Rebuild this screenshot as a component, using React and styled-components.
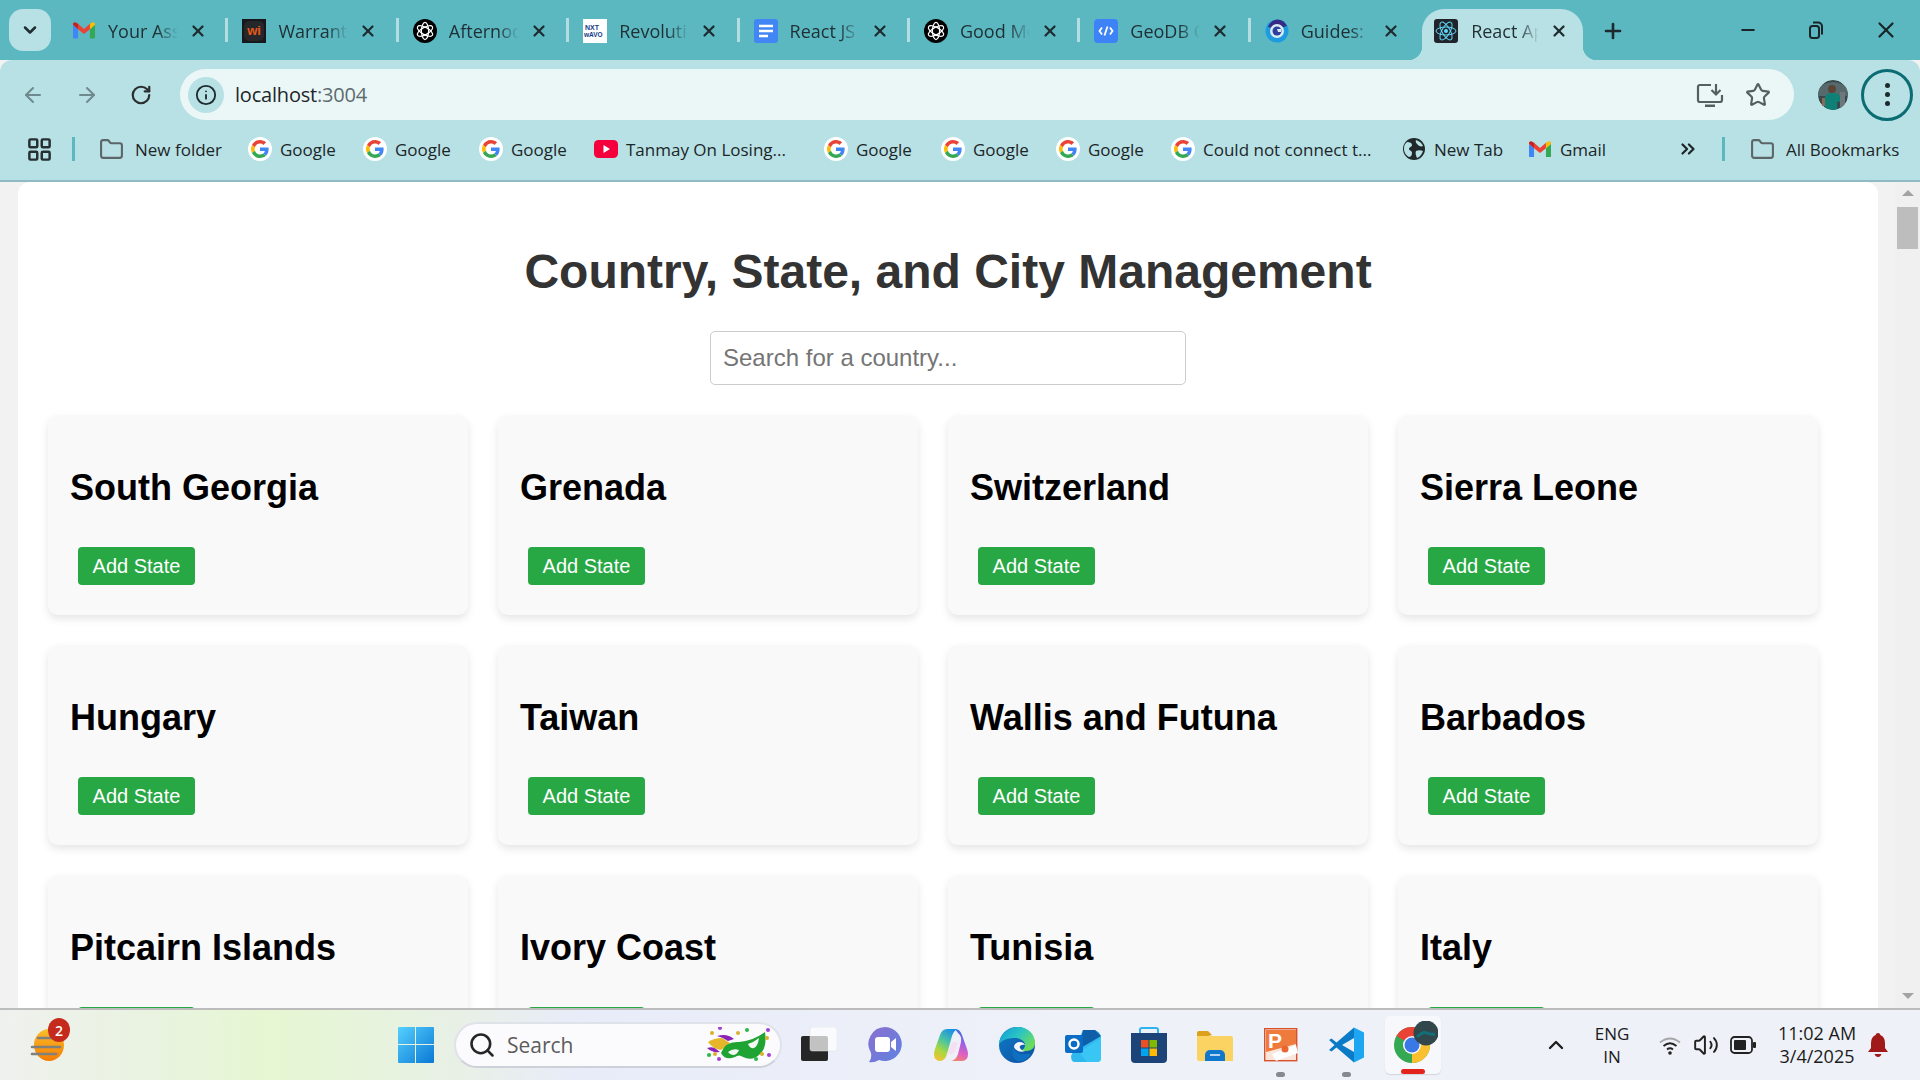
import React from "react";
import styled, { createGlobalStyle } from "styled-components";
import {
  ArrowLeft,
  ArrowRight,
  RotateCw,
  Info,
  Star,
  X,
  Plus,
  Minus,
  ChevronDown,
  ChevronUp,
  ChevronsRight,
  Folder,
  LayoutGrid,
  Search,
  Volume2,
} from "lucide-react";

const TEAL = "#5bb8c1";
const PALE = "#b8e1e5";
const UI_FONT = `"Open Sans", "Noto Sans", sans-serif`;

const GlobalStyle = createGlobalStyle`
  html, body {
    margin: 0;
    padding: 0;
    overflow: hidden;
  }
  * {
    box-sizing: border-box;
  }
`;

const Screen = styled.div`
  width: 1920px;
  height: 1080px;
  display: flex;
  flex-direction: column;
  overflow: hidden;
  background: #f2f2f2;
  font-family: ${UI_FONT};
`;

/* tab strip */
const TabStrip = styled.div`
  height: 60px;
  flex: none;
  display: flex;
  align-items: flex-end;
  background: ${TEAL};
  padding-left: 9px;
`;

const TabMenu = styled.div`
  width: 42px;
  height: 42px;
  margin: 0 7px 9px 0;
  border-radius: 14px;
  background: ${PALE};
  display: flex;
  align-items: center;
  justify-content: center;
  color: #1f2d30;
`;

const Tab = styled.div`
  position: relative;
  height: 51px;
  width: ${(p) => (p.$active ? "161px" : "167.4px")};
  margin-left: ${(p) => (p.$active ? "4px" : "0")};
  padding-left: ${(p) => (p.$active ? "12px" : "14px")};
  padding-bottom: 8px;
  display: flex;
  align-items: center;
  color: #1f2f33;
  background: ${(p) => (p.$active ? PALE : "transparent")};
  border-radius: 22px 22px 0 0;

  ${(p) =>
    p.$active &&
    `
    &::before, &::after {
      content: "";
      position: absolute;
      bottom: 0;
      width: 14px;
      height: 14px;
    }
    &::before {
      left: -14px;
      background: radial-gradient(circle at 0 0, transparent 14px, ${PALE} 14.5px);
    }
    &::after {
      right: -14px;
      background: radial-gradient(circle at 100% 0, transparent 14px, ${PALE} 14.5px);
    }
  `}
`;

const Favicon = styled.span`
  width: 24px;
  height: 24px;
  flex: none;
  display: flex;
  align-items: center;
  justify-content: center;
`;

const TabTitle = styled.span`
  width: ${(p) => (p.$active ? "68px" : "70px")};
  margin-left: ${(p) => (p.$active ? "13px" : "12px")};
  font-size: 18px;
  white-space: nowrap;
  overflow: hidden;
  -webkit-mask-image: linear-gradient(to right, #000 70%, transparent 100%);
  mask-image: linear-gradient(to right, #000 70%, transparent 100%);
`;

const TabClose = styled.span`
  margin-left: 11px;
  width: 18px;
  display: flex;
  justify-content: center;
  color: #1f2d30;
`;

const TabSeparator = styled.span`
  width: 3px;
  height: 24px;
  margin-bottom: 18px;
  background: #b4dde1;
  flex: none;
`;

const NewTab = styled.div`
  margin: 0 0 17px 18px;
  color: #1d2a2d;
  display: flex;
`;

const WindowControls = styled.div`
  margin-left: auto;
  display: flex;
  height: 60px;
`;

const WindowButton = styled.div`
  width: 69px;
  display: flex;
  align-items: center;
  justify-content: center;
  color: #182427;
`;

/* toolbar */
const Chrome = styled.div`
  flex: none;
  background: ${PALE};
  border-radius: 12px 12px 0 0;
  border-bottom: 2px solid #8fbcc3;
`;

const Toolbar = styled.div`
  height: 60px;
  padding: 9px 0 0 18px;
  display: flex;
  align-items: center;
`;

const NavButton = styled.div`
  width: 30px;
  margin-right: 24px;
  display: flex;
  justify-content: center;
  color: ${(p) => (p.$dim ? "#6f8a8e" : "#2a2f30")};
`;

const Omnibox = styled.div`
  width: 1614px;
  height: 51px;
  border-radius: 26px;
  background: #ebf7f7;
  display: flex;
  align-items: center;
  padding: 0 23px 0 8px;
`;

const InfoBadge = styled.div`
  width: 36px;
  height: 36px;
  border-radius: 50%;
  background: ${PALE};
  display: flex;
  align-items: center;
  justify-content: center;
  color: #1e2b2d;
`;

const Url = styled.div`
  margin-left: 11px;
  font-size: 20px;
  color: #1d2628;
  letter-spacing: -0.2px;

  span {
    color: #5d6b6e;
  }
`;

const OmniActions = styled.div`
  margin-left: auto;
  display: flex;
  align-items: center;
  gap: 21px;
  color: #555f61;
`;

const Avatar = styled.div`
  width: 30px;
  height: 30px;
  margin-left: 24px;
  flex: none;
  border-radius: 50%;
  overflow: hidden;
`;

const MenuRing = styled.div`
  width: 52px;
  height: 52px;
  margin-left: 13px;
  flex: none;
  border-radius: 50%;
  border: 3px solid #0b6d73;
  display: flex;
  flex-direction: column;
  align-items: center;
  justify-content: center;
  gap: 4px;

  i {
    width: 5px;
    height: 5px;
    border-radius: 50%;
    background: #1c2a2c;
  }
`;

/* bookmarks */
const BookmarkBar = styled.div`
  height: 60px;
  padding: 0 0 2px 26px;
  display: flex;
  align-items: center;
  font-size: 17px;
  color: #1c2628;
`;

const BarDivider = styled.span`
  width: 3px;
  height: 24px;
  flex: none;
  margin: 0 ${(p) => p.$right || 24}px 0 ${(p) => p.$left || 19}px;
  background: ${TEAL};
`;

const Bookmark = styled.div`
  flex: none;
  width: ${(p) => (p.$w ? `${p.$w}px` : "auto")};
  display: flex;
  align-items: center;
  gap: ${(p) => p.$gap || 10}px;
  white-space: nowrap;
`;

const BookmarkIcon = styled.span`
  width: ${(p) => p.$size || 20}px;
  height: 24px;
  flex: none;
  display: flex;
  align-items: center;
  justify-content: center;
  color: #5c6668;

  svg {
    flex: none;
  }
`;

const MoreBookmarks = styled.div`
  width: 24px;
  flex: none;
  display: flex;
  justify-content: center;
  color: #1c2628;
`;

/* page */
const Viewport = styled.div`
  flex: 1;
  min-height: 0;
  display: flex;
  background: #f2f2f2;
`;

const Panel = styled.main`
  width: 1860px;
  margin-left: 18px;
  flex: none;
  background: #fff;
  border-radius: 12px 12px 0 0;
  overflow: hidden;
  padding-top: 62px;
  font-family: "Liberation Sans", Arial, sans-serif;
`;

const PageTitle = styled.h1`
  margin: 0 0 31px;
  font-size: 48px;
  line-height: 56px;
  font-weight: 700;
  text-align: center;
  color: #333;
`;

const SearchInput = styled.input`
  display: block;
  width: 476px;
  height: 54px;
  margin: 0 auto 30px;
  padding: 0 12px;
  border: 1px solid #ccc;
  border-radius: 5px;
  font-family: inherit;
  font-size: 24px;
  color: #333;
  outline: none;

  &::placeholder {
    color: #757575;
    opacity: 1;
  }
`;

const CardGrid = styled.div`
  display: grid;
  grid-template-columns: repeat(4, 420px);
  column-gap: 30px;
  row-gap: 30px;
  padding-left: 30px;
`;

const Card = styled.section`
  height: 200px;
  padding: 52px 22px 0;
  background: #f9f9f9;
  border-radius: 10px;
  box-shadow: 0 4px 8px rgba(0, 0, 0, 0.1);
`;

const CardTitle = styled.h2`
  margin: 0 0 38px;
  font-size: 36px;
  line-height: 42px;
  font-weight: 700;
  color: #000;
`;

const AddButton = styled.button`
  display: block;
  width: 117px;
  height: 38px;
  margin-left: 8px;
  padding: 0;
  border: none;
  border-radius: 4px;
  background: #28a745;
  color: #fff;
  font-family: inherit;
  font-size: 20px;
`;

const Scrollbar = styled.div`
  width: 25px;
  margin-left: 17px;
  flex: none;
  background: #f0f0f0;
  display: flex;
  flex-direction: column;
  align-items: center;
  padding: 8px 0 9px;
`;

const ScrollArrow = styled.div`
  width: 0;
  height: 0;
  border-left: 6px solid transparent;
  border-right: 6px solid transparent;
  ${(p) => (p.$down ? "border-top" : "border-bottom")}: 6px solid #a3a3a3;
  ${(p) => p.$down && "margin-top: auto;"}
`;

const ScrollThumb = styled.div`
  width: 21px;
  height: 42px;
  margin-top: 11px;
  background: #bdbdbd;
`;

/* taskbar */
const Taskbar = styled.footer`
  height: 72px;
  flex: none;
  border-top: 2px solid #bcbcbc;
  display: flex;
  align-items: center;
  padding-left: 30px;
  background: linear-gradient(
    90deg,
    #eff1ee 0%,
    #e9f3e0 8%,
    #e6f7d2 14%,
    #e8f0e6 24%,
    #e8ecf9 30%,
    #eef1f8 55%,
    #eef1f7 100%
  );
`;

const Widget = styled.div`
  position: relative;
  width: 36px;
  height: 40px;
  margin-right: 332px;
  flex: none;
`;

const Badge = styled.span`
  position: absolute;
  top: -7px;
  right: -4px;
  width: 22px;
  height: 24px;
  border-radius: 50%;
  background: #c42b1c;
  color: #fff;
  font-size: 14px;
  font-weight: 600;
  display: flex;
  align-items: center;
  justify-content: center;
`;

const TaskIcon = styled.div`
  position: relative;
  width: 36px;
  height: 36px;
  flex: none;
  margin-left: ${(p) => (p.$ml === undefined ? 30 : p.$ml)}px;
  display: flex;
  align-items: center;
  justify-content: center;

  ${(p) =>
    p.$running &&
    `
    &::after {
      content: "";
      position: absolute;
      left: 9px;
      bottom: -14px;
      width: 9px;
      height: 5px;
      border-radius: 3px;
      background: #858a90;
      transform: translateX(4px);
    }
  `}
`;

const ActiveTask = styled.div`
  position: relative;
  width: 56px;
  height: 58px;
  margin-left: 20px;
  flex: none;
  border-radius: 5px;
  background: #f6f8fc;
  box-shadow: 0 1px 1px rgba(0, 0, 0, 0.12);
  display: flex;
  align-items: center;
  justify-content: center;
  padding-bottom: 4px;

  &::after {
    content: "";
    position: absolute;
    bottom: 0;
    left: 16px;
    width: 24px;
    height: 5px;
    border-radius: 3px;
    background: #e3231c;
  }
`;

const SearchPill = styled.div`
  width: 328px;
  height: 46px;
  margin-left: 20px;
  flex: none;
  display: flex;
  align-items: center;
  padding: 0 9px 0 12px;
  border-radius: 23px;
  background: #fbfbfe;
  border: 2px solid #e0e2ea;
  border-bottom-color: #cfd1da;
  color: #5c5c5c;
  font-size: 21px;
`;

const SearchLabel = styled.span`
  margin-left: 11px;
`;

const MaskSlot = styled.span`
  margin-left: auto;
  display: flex;
`;

const Caret = styled.div`
  margin-left: 103px;
  width: 24px;
  display: flex;
  justify-content: center;
  color: #1f1f1f;
`;

const TrayText = styled.div`
  flex: none;
  text-align: center;
  font-size: 17px;
  line-height: 23px;
  color: #1b1b1b;
`;

const Lang = styled(TrayText)`
  width: 50px;
  margin-left: 19px;
`;

const TrayIcons = styled.div`
  display: flex;
  align-items: center;
  margin-left: 21px;
  gap: 11px;
  color: #222;
`;

const Clock = styled(TrayText)`
  width: 90px;
  margin-left: 16px;
  font-size: 18px;
`;

const BellSlot = styled.div`
  margin-left: 6px;
  display: flex;
`;

/* drawn icons */
const GoogleIcon = ({ size = 24 }) => (
  <svg width={size} height={size} viewBox="-8 -8 64 64">
    <circle cx="24" cy="24" r="32" fill="#fff" />
    <path fill="#EA4335" d="M24 9.5c3.54 0 6.71 1.22 9.21 3.6l6.85-6.85C35.9 2.38 30.47 0 24 0 14.62 0 6.51 5.38 2.56 13.22l7.98 6.19C12.43 13.72 17.74 9.5 24 9.5z" />
    <path fill="#4285F4" d="M46.98 24.55c0-1.57-.15-3.09-.38-4.55H24v9.02h12.94c-.58 2.96-2.26 5.48-4.78 7.18l7.73 6c4.51-4.18 7.09-10.36 7.09-17.65z" />
    <path fill="#FBBC05" d="M10.53 28.59c-.48-1.45-.76-2.99-.76-4.59s.27-3.14.76-4.59l-7.98-6.19C.92 16.46 0 20.12 0 24c0 3.88.92 7.54 2.56 10.78l7.97-6.19z" />
    <path fill="#34A853" d="M24 48c6.48 0 11.93-2.13 15.89-5.81l-7.73-6c-2.15 1.45-4.92 2.3-8.16 2.3-6.26 0-11.57-4.22-13.47-9.91l-7.98 6.19C6.51 42.62 14.62 48 24 48z" />
  </svg>
);

const GmailIcon = ({ width = 22 }) => (
  <svg width={width} height={(width * 18) / 24} viewBox="0 0 24 18">
    <path fill="#4285F4" d="M0 3v13.5A1.5 1.5 0 0 0 1.5 18h4V8z" />
    <path fill="#34A853" d="M24 3v13.5a1.5 1.5 0 0 1-1.5 1.5h-4V8z" />
    <path fill="#EA4335" d="M5.5 8V2L12 7.5 18.5 2v6L12 13z" />
    <path fill="#FBBC04" d="M18.5 8V2L21 .5A2 2 0 0 1 24 2v1z" />
    <path fill="#C5221F" d="M5.5 8V2L3 .5A2 2 0 0 0 0 2v1z" />
  </svg>
);

const GptIcon = () => (
  <svg width="24" height="24" viewBox="0 0 24 24">
    <circle cx="12" cy="12" r="12" fill="#000" />
    <g fill="none" stroke="#fff" strokeWidth="1.2">
      <ellipse cx="12" cy="12" rx="3.6" ry="8.6" />
      <ellipse cx="12" cy="12" rx="3.6" ry="8.6" transform="rotate(60 12 12)" />
      <ellipse cx="12" cy="12" rx="3.6" ry="8.6" transform="rotate(120 12 12)" />
    </g>
  </svg>
);

const WarrantyIcon = () => (
  <svg width="24" height="24" viewBox="0 0 24 24">
    <rect width="24" height="24" fill="#17181b" />
    <rect x="2" y="2" width="20" height="20" rx="5" fill="#26272b" />
    <text x="12" y="16" textAnchor="middle" fontSize="13" fontWeight="700" fill="#e8591a" fontFamily="Liberation Sans">wi</text>
  </svg>
);

const WaveIcon = () => (
  <svg width="24" height="24" viewBox="0 0 24 24">
    <rect width="24" height="24" fill="#fff" />
    <text x="2" y="11" fontSize="7" fontWeight="700" fill="#153a8a" fontFamily="Liberation Sans">NXT</text>
    <text x="1" y="18" fontSize="6.5" fontWeight="700" fill="#153a8a" fontFamily="Liberation Sans">wAVO</text>
  </svg>
);

const DocsIcon = () => (
  <svg width="24" height="24" viewBox="0 0 24 24">
    <rect width="24" height="24" rx="3" fill="#4285f4" />
    <path d="M5 7h14M5 12h14M5 17h9" stroke="#fff" strokeWidth="2.4" />
  </svg>
);

const GeoIcon = () => (
  <svg width="24" height="24" viewBox="0 0 24 24">
    <rect width="24" height="24" rx="4" fill="#3d82f6" />
    <path d="M8 8.5 5.5 12 8 15.5M16 8.5l2.5 3.5-2.5 3.5M13.5 7.5l-3 9" fill="none" stroke="#fff" strokeWidth="1.8" />
  </svg>
);

const GuidesIcon = () => (
  <svg width="24" height="24" viewBox="0 0 24 24">
    <circle cx="12" cy="12" r="11.5" fill="#1e9be0" />
    <path d="M12 .5A11.5 11.5 0 0 1 22 7L12 10 3 8A11.5 11.5 0 0 1 12 .5z" fill="#352a86" />
    <circle cx="12" cy="12" r="7" fill="#d7ecf2" />
    <circle cx="12" cy="12" r="4.5" fill="#2f3f9d" />
    <path d="M12 10h4v3h-3z" fill="#d7ecf2" />
  </svg>
);

const ReactIcon = () => (
  <svg width="24" height="24" viewBox="0 0 24 24">
    <rect width="24" height="24" rx="3" fill="#20232a" />
    <circle cx="12" cy="12" r="2" fill="#61dafb" />
    <g fill="none" stroke="#61dafb" strokeWidth="1">
      <ellipse cx="12" cy="12" rx="10" ry="4" />
      <ellipse cx="12" cy="12" rx="10" ry="4" transform="rotate(60 12 12)" />
      <ellipse cx="12" cy="12" rx="10" ry="4" transform="rotate(120 12 12)" />
    </g>
  </svg>
);

const YoutubeIcon = () => (
  <svg width="24" height="24" viewBox="0 0 24 24">
    <rect y="3" width="24" height="18" rx="4.5" fill="#f5003d" />
    <path d="M9.5 8v8l6.5-4z" fill="#fff" />
  </svg>
);

const GlobeIcon = () => (
  <svg width="22" height="22" viewBox="0 0 22 22">
    <circle cx="11" cy="11" r="11" fill="#20282a" />
    <path d="M4 4c3 0 5 1 5 3s-3 2-3 4 3 1 3 4-2 4-3 4c-2-1-5-4-5-8s1-5 3-7zM13 2c3 1 6 3 7 6-2 1-4 0-5-1s-3-3-2-5zM13 13c2-1 5-1 7 0-1 3-3 6-6 7-1-2-2-5-1-7z" fill="#b8e1e5" />
  </svg>
);

const RestoreIcon = () => (
  <svg width="15" height="18" viewBox="0 0 15 18" fill="none" stroke="#182427" strokeWidth="2">
    <rect x="1" y="5" width="9" height="12" rx="2.5" />
    <path d="M4 1.5h5a4 4 0 0 1 4 4v8" />
  </svg>
);

const InstallIcon = () => (
  <svg width="28" height="24" viewBox="0 0 28 24" fill="none" stroke="currentColor" strokeWidth="2.2">
    <path d="M15 2H4a2 2 0 0 0-2 2v13a2 2 0 0 0 2 2h20a2 2 0 0 0 2-2v-5" />
    <path d="M9 23h10" strokeWidth="3" />
    <path d="M20 1v10M15.5 7l4.5 4.5L24.5 7" />
  </svg>
);

const Portrait = ({ size = 30 }) => (
  <svg width={size} height={size} viewBox="0 0 30 30">
    <circle cx="15" cy="15" r="15" fill="#38484c" />
    <path d="M0 8 Q15 -4 30 8 V16 H0z" fill="#566a6d" />
    <circle cx="14" cy="9" r="4" fill="#5b4436" />
    <path d="M7 30V17q1-4 7-4t8 3l2 5-5 1v8z" fill="#0f8076" />
    <path d="M22 12h5v16h-5z" fill="#6d787c" />
    <path d="M4 18h3v8H4z" fill="#8b6a55" />
  </svg>
);

const WeatherIcon = () => (
  <svg width="36" height="40" viewBox="0 0 36 40">
    <defs>
      <linearGradient id="wx" x1="0" y1="0" x2="0" y2="1">
        <stop offset="0" stopColor="#fbc02d" />
        <stop offset="1" stopColor="#f57c00" />
      </linearGradient>
    </defs>
    <ellipse cx="19" cy="20" rx="15" ry="16" fill="url(#wx)" />
    <path d="M8 13h22M2 22h28M2 29h24" stroke="#80807c" strokeWidth="2.6" strokeLinecap="round" />
  </svg>
);

const WindowsIcon = () => (
  <svg width="36" height="36" viewBox="0 0 36 36">
    <defs>
      <linearGradient id="winA" x1="0" y1="0" x2="1" y2="1">
        <stop offset="0" stopColor="#55d0ff" />
        <stop offset="1" stopColor="#0a78d4" />
      </linearGradient>
    </defs>
    <path d="M1 0h16v17H0V1a1 1 0 0 1 1-1zM18 0h17a1 1 0 0 1 1 1v16H18zM0 18h17v18H1a1 1 0 0 1-1-1zM18 18h18v17a1 1 0 0 1-1 1H18z" fill="url(#winA)" />
  </svg>
);

const MaskIcon = () => (
  <svg width="66" height="36" viewBox="0 0 66 36">
    <path d="M3 15q6-4 14-4l8 5-9 7q-8-1-13-8z" fill="#e5b62a" />
    <path d="M12 9q10-3 17 3l-6 2q-6-4-11-5zM2 21q6-2 9 1l4 3q-8 1-13-4z" fill="#8a22b8" />
    <path d="M16 26Q20 14 34 15Q48 14 60 5Q62 20 56 26Q48 35 38 30Q34 27 30 30Q20 34 16 26z" fill="#1fa332" />
    <path d="M23 25q5-4 11-2-2 5-6 5-3 0-5-3zM43 17q6-2 11-6-1 8-5 10-4 1-6-4z" fill="#f4f8f2" />
    {[
      [7, 6, "#d8b02c"], [15, 1, "#a63fd4"], [33, 6, "#d8b02c"], [42, 3, "#2bb64a"],
      [63, 3, "#a63fd4"], [62, 11, "#d8b02c"], [4, 28, "#2bb64a"], [10, 27, "#d8b02c"],
      [14, 32, "#a63fd4"], [51, 32, "#2bb64a"], [57, 27, "#d8b02c"], [64, 28, "#a63fd4"],
    ].map(([cx, cy, fill]) => (
      <circle key={`${cx}-${cy}`} cx={cx} cy={cy} r="2" fill={fill} />
    ))}
  </svg>
);

const TaskViewIcon = () => (
  <svg width="36" height="36" viewBox="0 0 36 36">
    <rect x="0" y="9" width="27" height="25" rx="2" fill="#262626" />
    <rect x="9" y="0" width="27" height="24" rx="2" fill="#fff" fillOpacity="0.72" stroke="#dcdde2" strokeWidth="0.5" />
  </svg>
);

const MeetIcon = () => (
  <svg width="34" height="36" viewBox="0 0 34 36">
    <defs>
      <linearGradient id="meet" x1="0" y1="0" x2="1" y2="1">
        <stop offset="0" stopColor="#8a6fd0" />
        <stop offset="1" stopColor="#5f83e0" />
      </linearGradient>
    </defs>
    <path d="M17 0a17 17 0 1 1-6 33q-5 3-10 2 3-3 2-9A17 17 0 0 1 17 0z" fill="url(#meet)" />
    <rect x="7" y="10" width="15" height="15" rx="3" fill="#fff" />
    <path d="M23 15l5-4v13l-5-4z" fill="#fff" />
  </svg>
);

const CopilotIcon = () => (
  <svg width="34" height="34" viewBox="0 0 34 34">
    <defs>
      <linearGradient id="copA" x1="0.7" y1="0" x2="0.2" y2="1">
        <stop offset="0" stopColor="#1a8fe8" />
        <stop offset="0.4" stopColor="#4cc5a0" />
        <stop offset="0.7" stopColor="#a8d840" />
        <stop offset="1" stopColor="#f2c230" />
      </linearGradient>
      <linearGradient id="copB" x1="0.6" y1="0" x2="0.4" y2="1">
        <stop offset="0" stopColor="#2a6fe0" />
        <stop offset="0.4" stopColor="#9a60e8" />
        <stop offset="0.75" stopColor="#e060c0" />
        <stop offset="1" stopColor="#f08070" />
      </linearGradient>
    </defs>
    <path d="M21 1q5 0 7 6l5 14q1 3 1 5 0 7-6 7H17q5-1 7-7l3-12q1-6-3-9z" fill="url(#copB)" />
    <path d="M13 1h11q-4 1-6 7l-5 18q-2 7-7 7H6Q0 33 0 26q0-2 1-5L6 7q2-6 7-6z" fill="url(#copA)" />
    <path d="M18 14h6l-3 9q-1 3-4 3h-5q2-1 3-4z" fill="#f6dff0" />
  </svg>
);

const EdgeIcon = () => (
  <svg width="36" height="36" viewBox="0 0 36 36">
    <defs>
      <linearGradient id="edgeA" x1="0" y1="0" x2="1" y2="0.6">
        <stop offset="0" stopColor="#0b9bdc" />
        <stop offset="0.55" stopColor="#2dc5c2" />
        <stop offset="1" stopColor="#6ddc5c" />
      </linearGradient>
      <linearGradient id="edgeB" x1="0" y1="0" x2="1" y2="1">
        <stop offset="0" stopColor="#0f7cc8" />
        <stop offset="1" stopColor="#0d4fa0" />
      </linearGradient>
    </defs>
    <circle cx="18" cy="18" r="18" fill="url(#edgeB)" />
    <path d="M0 17C1 7 9 0 19 0c10 0 17 7 17 16 0 5-4 8-9 8h-6c3-1 5-3 5-6 0-4-5-7-10-7C9 11 3 13 0 17z" fill="url(#edgeA)" />
    <path d="M15 19c-1 6 5 9 12 8l5 0c-3 6-9 8-14 7-5-2-6-9-3-15z" fill="#0f6fc0" />
    <path d="M26 24c-5 2-10-1-11-4 0-3 3-5 6-5 2 0 4 1 5 3-4-1-6 1-5 3s3 3 5 3z" fill="#f3f5fb" />
  </svg>
);

const OutlookIcon = () => (
  <svg width="36" height="34" viewBox="0 0 36 34">
    <path d="M18 2h10a8 8 0 0 1 8 8v20a4 4 0 0 1-4 4H10q-4 0-4-6z" fill="#2fb8ee" />
    <path d="M18 2h12l6 6-22 13z" fill="#0f5ea8" />
    <path d="M36 10 14 24l8 10h10a4 4 0 0 0 4-4z" fill="#39c6f4" />
    <rect x="0" y="7" width="18" height="18" rx="2" fill="#0a6cc4" />
    <circle cx="9" cy="16" r="4.5" fill="none" stroke="#fff" strokeWidth="2.4" />
  </svg>
);

const StoreIcon = () => (
  <svg width="36" height="36" viewBox="0 0 36 36">
    <path d="M9 6V2.5Q9 1 11 1h14q2 0 2 1.5V6" fill="none" stroke="#2db4ee" strokeWidth="2" />
    <path d="M0 6h36v26a4 4 0 0 1-4 4H4a4 4 0 0 1-4-4z" fill="#1d4478" />
    <rect x="10" y="13" width="7.5" height="7.5" fill="#ea4f25" />
    <rect x="18.5" y="13" width="7.5" height="7.5" fill="#7fb900" />
    <rect x="10" y="21.5" width="7.5" height="7.5" fill="#00a4ef" />
    <rect x="18.5" y="21.5" width="7.5" height="7.5" fill="#ffb900" />
  </svg>
);

const ExplorerIcon = () => (
  <svg width="36" height="36" viewBox="0 0 36 36">
    <path d="M0 6a2 2 0 0 1 2-2h9l4 4-15 4z" fill="#dca019" />
    <path d="M0 9h34a2 2 0 0 1 2 2v23H2a2 2 0 0 1-2-2z" fill="#fbd363" />
    <path d="M8 28a5 5 0 0 1 5-5h10a5 5 0 0 1 5 5v6H8z" fill="#0f78cc" />
    <path d="M13 28h10" stroke="#dcecf8" strokeWidth="1.6" />
  </svg>
);

const PowerPointIcon = () => (
  <svg width="34" height="34" viewBox="0 0 34 34">
    <rect x="0.7" y="0.7" width="32" height="32" fill="#f9e6da" stroke="#d8512a" strokeWidth="1.4" />
    <path d="M2 2h30v14L2 24z" fill="#ee7a3e" />
    <text x="4" y="20" fontSize="21" fontWeight="700" fill="#fff" fontFamily="Liberation Sans">P</text>
    <path d="M8 26l24-9 2 8-22 8z" fill="#fff" />
    <circle cx="21" cy="21" r="3.5" fill="#e9672e" />
  </svg>
);

const VsCodeIcon = () => (
  <svg width="36" height="36" viewBox="0 0 36 36">
    <path d="M25 .5 7.5 15.5 2.5 11.5 0 13l5.5 5L0 23l2.5 1.5 5-4L25 35.5V25L13 18 25 11z" fill="#0a7bc6" />
    <path d="M25 .5 35 5.5v25l-10 5z" fill="#1fa6f2" />
  </svg>
);

const ChromeIcon = () => (
  <svg width="50" height="44" viewBox="0 0 50 44">
    <g fill="none" strokeWidth="11" transform="translate(6 4)">
      <circle cx="18" cy="20" r="12.5" stroke="#34a853" />
      <path d="M7.2 13.7A12.5 12.5 0 0 1 28.8 13.7" stroke="#ea4335" />
      <path d="M28.8 13.7A12.5 12.5 0 0 1 18 32.5" stroke="#fbc02d" />
    </g>
    <circle cx="24" cy="24" r="9" fill="#f6f8fc" />
    <circle cx="24" cy="24" r="7.5" fill="#3b78e7" />
    <circle cx="38" cy="12" r="12.5" fill="#31474c" />
    <path d="M29 16q6-6 10-4t8 1" stroke="#0f7078" strokeWidth="3" fill="none" />
  </svg>
);

const WifiIcon = () => (
  <svg width="24" height="24" viewBox="0 0 24 24" fill="none">
    <path d="M2 9.5q10-8 20 0" stroke="#a4a6a8" strokeWidth="1.8" />
    <path d="M5.5 13q6.5-5.5 13 0M9 16.5q3-2.5 6 0" stroke="#222" strokeWidth="1.8" />
    <circle cx="12" cy="20" r="1.8" fill="#222" />
  </svg>
);

const BatteryIcon = () => (
  <svg width="26" height="20" viewBox="0 0 26 20">
    <rect x="1" y="2" width="21" height="16" rx="3.5" fill="none" stroke="#222" strokeWidth="1.8" />
    <rect x="4" y="5" width="12" height="10" rx="1" fill="#222" />
    <rect x="23" y="7" width="3" height="6" rx="1" fill="#222" />
  </svg>
);

const BellIcon = () => (
  <svg width="20" height="26" viewBox="0 0 20 26" fill="#a01a1a">
    <path d="M10 1q2 0 2.4 2Q17 5 17 11v5l3 4H0l3-4v-5q0-6 4.6-8Q8 1 10 1z" />
    <path d="M6.5 22h7q-1 3-3.5 3t-3.5-3z" />
  </svg>
);

const TABS = [
  { title: "Your Assignment", icon: <GmailIcon /> },
  { title: "Warranty", icon: <WarrantyIcon /> },
  { title: "Afternoon", icon: <GptIcon /> },
  { title: "Revolution", icon: <WaveIcon /> },
  { title: "React JS", icon: <DocsIcon /> },
  { title: "Good Morning", icon: <GptIcon /> },
  { title: "GeoDB Cities", icon: <GeoIcon /> },
  { title: "Guides:", icon: <GuidesIcon /> },
];

const BOOKMARKS = [
  { label: "Google", w: 115, icon: <GoogleIcon /> },
  { label: "Google", w: 116, icon: <GoogleIcon /> },
  { label: "Google", w: 115, icon: <GoogleIcon /> },
  { label: "Tanmay On Losing...", w: 230, icon: <YoutubeIcon /> },
  { label: "Google", w: 117, icon: <GoogleIcon /> },
  { label: "Google", w: 115, icon: <GoogleIcon /> },
  { label: "Google", w: 115, icon: <GoogleIcon /> },
  { label: "Could not connect t...", w: 231, icon: <GoogleIcon /> },
  { label: "New Tab", w: 126, icon: <GlobeIcon /> },
  { label: "Gmail", w: 146, icon: <GmailIcon /> },
];

const COUNTRIES = [
  "South Georgia",
  "Grenada",
  "Switzerland",
  "Sierra Leone",
  "Hungary",
  "Taiwan",
  "Wallis and Futuna",
  "Barbados",
  "Pitcairn Islands",
  "Ivory Coast",
  "Tunisia",
  "Italy",
];

export default function App() {
  return (
    <Screen>
      <GlobalStyle />
      <TabStrip>
        <TabMenu>
          <ChevronDown size={20} strokeWidth={3} />
        </TabMenu>
        {TABS.map((tab, i) => (
          <React.Fragment key={tab.title}>
            <Tab>
              <Favicon>{tab.icon}</Favicon>
              <TabTitle>{tab.title}</TabTitle>
              <TabClose>
                <X size={18} strokeWidth={3} />
              </TabClose>
            </Tab>
            {i < TABS.length - 1 && <TabSeparator />}
          </React.Fragment>
        ))}
        <Tab $active>
          <Favicon>
            <ReactIcon />
          </Favicon>
          <TabTitle $active>React App</TabTitle>
          <TabClose>
            <X size={18} strokeWidth={3} />
          </TabClose>
        </Tab>
        <NewTab>
          <Plus size={24} strokeWidth={2.6} />
        </NewTab>
        <WindowControls>
          <WindowButton>
            <Minus size={20} strokeWidth={2.4} />
          </WindowButton>
          <WindowButton>
            <RestoreIcon />
          </WindowButton>
          <WindowButton>
            <X size={26} strokeWidth={2} />
          </WindowButton>
        </WindowControls>
      </TabStrip>

      <Chrome>
        <Toolbar>
          <NavButton $dim>
            <ArrowLeft size={24} strokeWidth={2} />
          </NavButton>
          <NavButton $dim>
            <ArrowRight size={24} strokeWidth={2} />
          </NavButton>
          <NavButton>
            <RotateCw size={22} strokeWidth={2.4} />
          </NavButton>
          <Omnibox>
            <InfoBadge>
              <Info size={22} strokeWidth={2} />
            </InfoBadge>
            <Url>
              localhost<span>:3004</span>
            </Url>
            <OmniActions>
              <InstallIcon />
              <Star size={26} strokeWidth={2} />
            </OmniActions>
          </Omnibox>
          <Avatar>
            <Portrait />
          </Avatar>
          <MenuRing>
            <i />
            <i />
            <i />
          </MenuRing>
        </Toolbar>

        <BookmarkBar>
          <BookmarkIcon $size={27}>
            <LayoutGrid size={27} strokeWidth={2.2} color="#262f31" />
          </BookmarkIcon>
          <BarDivider />
          <Bookmark $w={151} $gap={12}>
            <BookmarkIcon $size={24}>
              <Folder size={25} strokeWidth={2} />
            </BookmarkIcon>
            New folder
          </Bookmark>
          {BOOKMARKS.map((b, i) => (
            <Bookmark key={i} $w={b.w}>
              <BookmarkIcon>{b.icon}</BookmarkIcon>
              {b.label}
            </Bookmark>
          ))}
          <MoreBookmarks>
            <ChevronsRight size={22} strokeWidth={2.4} />
          </MoreBookmarks>
          <BarDivider $left={22} $right={25} />
          <Bookmark $gap={12}>
            <BookmarkIcon $size={24}>
              <Folder size={25} strokeWidth={2} />
            </BookmarkIcon>
            All Bookmarks
          </Bookmark>
        </BookmarkBar>
      </Chrome>

      <Viewport>
        <Panel>
          <PageTitle>Country, State, and City Management</PageTitle>
          <SearchInput placeholder="Search for a country..." />
          <CardGrid>
            {COUNTRIES.map((name) => (
              <Card key={name}>
                <CardTitle>{name}</CardTitle>
                <AddButton>Add State</AddButton>
              </Card>
            ))}
          </CardGrid>
        </Panel>
        <Scrollbar>
          <ScrollArrow />
          <ScrollThumb />
          <ScrollArrow $down />
        </Scrollbar>
      </Viewport>

      <Taskbar>
        <Widget>
          <WeatherIcon />
          <Badge>2</Badge>
        </Widget>
        <TaskIcon $ml={0}>
          <WindowsIcon />
        </TaskIcon>
        <SearchPill>
          <Search size={28} strokeWidth={2.2} color="#262626" />
          <SearchLabel>Search</SearchLabel>
          <MaskSlot>
            <MaskIcon />
          </MaskSlot>
        </SearchPill>
        <TaskIcon $ml={19}>
          <TaskViewIcon />
        </TaskIcon>
        <TaskIcon>
          <MeetIcon />
        </TaskIcon>
        <TaskIcon>
          <CopilotIcon />
        </TaskIcon>
        <TaskIcon>
          <EdgeIcon />
        </TaskIcon>
        <TaskIcon>
          <OutlookIcon />
        </TaskIcon>
        <TaskIcon>
          <StoreIcon />
        </TaskIcon>
        <TaskIcon>
          <ExplorerIcon />
        </TaskIcon>
        <TaskIcon $running>
          <PowerPointIcon />
        </TaskIcon>
        <TaskIcon $running>
          <VsCodeIcon />
        </TaskIcon>
        <ActiveTask>
          <ChromeIcon />
        </ActiveTask>
        <Caret>
          <ChevronUp size={24} strokeWidth={2.4} />
        </Caret>
        <Lang>
          ENG
          <br />
          IN
        </Lang>
        <TrayIcons>
          <WifiIcon />
          <Volume2 size={26} strokeWidth={1.8} />
          <BatteryIcon />
        </TrayIcons>
        <Clock>
          11:02 AM
          <br />
          3/4/2025
        </Clock>
        <BellSlot>
          <BellIcon />
        </BellSlot>
      </Taskbar>
    </Screen>
  );
}
